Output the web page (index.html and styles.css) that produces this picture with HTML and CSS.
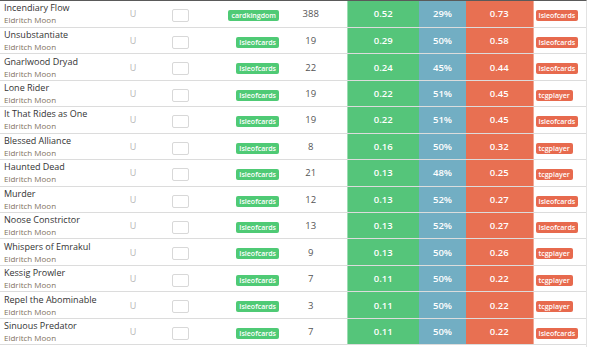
FILE: index.html
```html
<!DOCTYPE html>
<html>
<head>
<meta charset="utf-8">
<link rel="stylesheet" href="styles.css">
</head>
<body>
<div class="wrap">
<table class="cards">
<colgroup>
<col class="c-name"><col class="c-rar"><col class="c-chk"><col class="c-src"><col class="c-qty"><col class="c-buy"><col class="c-pct"><col class="c-sell"><col class="c-dst">
</colgroup>
<tbody>
<tr><td class="name"><div class="title">Incendiary Flow</div><div class="set">Eldritch Moon</div></td><td class="rar">U</td><td class="chk"><span class="box"></span></td><td class="src"><span class="badge g">cardkingdom</span></td><td class="qty">388</td><td class="buy">0.52</td><td class="pct">29%</td><td class="sell">0.73</td><td class="dst"><span class="badge r">Isleofcards</span></td></tr>
<tr><td class="name"><div class="title">Unsubstantiate</div><div class="set">Eldritch Moon</div></td><td class="rar">U</td><td class="chk"><span class="box"></span></td><td class="src"><span class="badge g">Isleofcards</span></td><td class="qty">19</td><td class="buy">0.29</td><td class="pct">50%</td><td class="sell">0.58</td><td class="dst"><span class="badge r">Isleofcards</span></td></tr>
<tr><td class="name"><div class="title">Gnarlwood Dryad</div><div class="set">Eldritch Moon</div></td><td class="rar">U</td><td class="chk"><span class="box"></span></td><td class="src"><span class="badge g">Isleofcards</span></td><td class="qty">22</td><td class="buy">0.24</td><td class="pct">45%</td><td class="sell">0.44</td><td class="dst"><span class="badge r">Isleofcards</span></td></tr>
<tr><td class="name"><div class="title">Lone Rider</div><div class="set">Eldritch Moon</div></td><td class="rar">U</td><td class="chk"><span class="box"></span></td><td class="src"><span class="badge g">Isleofcards</span></td><td class="qty">19</td><td class="buy">0.22</td><td class="pct">51%</td><td class="sell">0.45</td><td class="dst"><span class="badge r">tcgplayer</span></td></tr>
<tr><td class="name"><div class="title">It That Rides as One</div><div class="set">Eldritch Moon</div></td><td class="rar">U</td><td class="chk"><span class="box"></span></td><td class="src"><span class="badge g">Isleofcards</span></td><td class="qty">19</td><td class="buy">0.22</td><td class="pct">51%</td><td class="sell">0.45</td><td class="dst"><span class="badge r">Isleofcards</span></td></tr>
<tr><td class="name"><div class="title">Blessed Alliance</div><div class="set">Eldritch Moon</div></td><td class="rar">U</td><td class="chk"><span class="box"></span></td><td class="src"><span class="badge g">Isleofcards</span></td><td class="qty">8</td><td class="buy">0.16</td><td class="pct">50%</td><td class="sell">0.32</td><td class="dst"><span class="badge r">tcgplayer</span></td></tr>
<tr><td class="name"><div class="title">Haunted Dead</div><div class="set">Eldritch Moon</div></td><td class="rar">U</td><td class="chk"><span class="box"></span></td><td class="src"><span class="badge g">Isleofcards</span></td><td class="qty">21</td><td class="buy">0.13</td><td class="pct">48%</td><td class="sell">0.25</td><td class="dst"><span class="badge r">tcgplayer</span></td></tr>
<tr><td class="name"><div class="title">Murder</div><div class="set">Eldritch Moon</div></td><td class="rar">U</td><td class="chk"><span class="box"></span></td><td class="src"><span class="badge g">Isleofcards</span></td><td class="qty">12</td><td class="buy">0.13</td><td class="pct">52%</td><td class="sell">0.27</td><td class="dst"><span class="badge r">Isleofcards</span></td></tr>
<tr><td class="name"><div class="title">Noose Constrictor</div><div class="set">Eldritch Moon</div></td><td class="rar">U</td><td class="chk"><span class="box"></span></td><td class="src"><span class="badge g">Isleofcards</span></td><td class="qty">13</td><td class="buy">0.13</td><td class="pct">52%</td><td class="sell">0.27</td><td class="dst"><span class="badge r">Isleofcards</span></td></tr>
<tr><td class="name"><div class="title">Whispers of Emrakul</div><div class="set">Eldritch Moon</div></td><td class="rar">U</td><td class="chk"><span class="box"></span></td><td class="src"><span class="badge g">Isleofcards</span></td><td class="qty">9</td><td class="buy">0.13</td><td class="pct">50%</td><td class="sell">0.26</td><td class="dst"><span class="badge r">tcgplayer</span></td></tr>
<tr><td class="name"><div class="title">Kessig Prowler</div><div class="set">Eldritch Moon</div></td><td class="rar">U</td><td class="chk"><span class="box"></span></td><td class="src"><span class="badge g">Isleofcards</span></td><td class="qty">7</td><td class="buy">0.11</td><td class="pct">50%</td><td class="sell">0.22</td><td class="dst"><span class="badge r">tcgplayer</span></td></tr>
<tr><td class="name"><div class="title">Repel the Abominable</div><div class="set">Eldritch Moon</div></td><td class="rar">U</td><td class="chk"><span class="box"></span></td><td class="src"><span class="badge g">Isleofcards</span></td><td class="qty">3</td><td class="buy">0.11</td><td class="pct">50%</td><td class="sell">0.22</td><td class="dst"><span class="badge r">tcgplayer</span></td></tr>
<tr><td class="name"><div class="title">Sinuous Predator</div><div class="set">Eldritch Moon</div></td><td class="rar">U</td><td class="chk"><span class="box"></span></td><td class="src"><span class="badge g">Isleofcards</span></td><td class="qty">7</td><td class="buy">0.11</td><td class="pct">50%</td><td class="sell">0.22</td><td class="dst"><span class="badge r">Isleofcards</span></td></tr>
</tbody>
</table>
</div>
</body>
</html>
```

FILE: styles.css
```css
html, body {
  margin: 0;
  padding: 0;
  background: #fff;
}
body {
  font-family: "Open Sans", "DejaVu Sans", sans-serif;
  color: #333;
}
.wrap {
  width: 587px;
  height: 347px;
  overflow: hidden;
  border-top: 1px solid #5a5a5a;
  border-right: 1px solid #e3e3e3;
  box-sizing: border-box;
}
.cards {
  width: 586px;
  table-layout: fixed;
  border-collapse: collapse;
}
.c-name { width: 110px; }
.c-rar { width: 46px; }
.c-chk { width: 49px; }
.c-src { width: 78px; }
.c-qty { width: 64px; }
.c-buy { width: 72px; }
.c-pct { width: 47px; }
.c-sell { width: 67px; }
.c-dst { width: 53px; }
.cards tr {
  height: 26.45px;
}
.cards td {
  padding: 0;
  border-bottom: 1px solid #dcdcdc;
  vertical-align: middle;
  white-space: nowrap;
}
.name {
  padding-left: 4px !important;
}
.title {
  font-size: 9px;
  line-height: 12px;
  color: #333;
}
.set {
  font-size: 8px;
  line-height: 11px;
  color: #7f7260;
}
.rar {
  text-align: center;
  font-size: 9px;
  color: #b5b5b5;
}
.chk {
  text-align: center;
}
.box {
  display: inline-block;
  width: 15px;
  height: 11px;
  border: 1px solid #d8d8d8;
  border-radius: 2px;
  vertical-align: middle;
}
.src {
  text-align: right;
  padding-right: 4px !important;
}
.qty {
  text-align: center;
  font-size: 9.5px;
  color: #555;
  padding-right: 8px !important;
}
.buy, .pct, .sell {
  text-align: center;
  color: #fff;
  font-size: 9.5px;
  font-weight: 600;
}
.buy {
  background: #55c57a;
  border-left: 1px solid #9bdcb1;
}
.pct {
  background: #72aec3;
}
.sell {
  background: #e87052;
  border-right: 1px solid #f1a895;
}
.dst {
  padding-left: 2px !important;
}
.badge {
  display: inline-block;
  font-size: 7px;
  font-weight: 600;
  line-height: 11px;
  height: 11px;
  padding: 0 3px;
  border-radius: 2px;
  color: #fff;
  vertical-align: middle;
}
.badge.g {
  background: #4fca75;
}
.badge.r {
  background: #e76a4e;
}
```
